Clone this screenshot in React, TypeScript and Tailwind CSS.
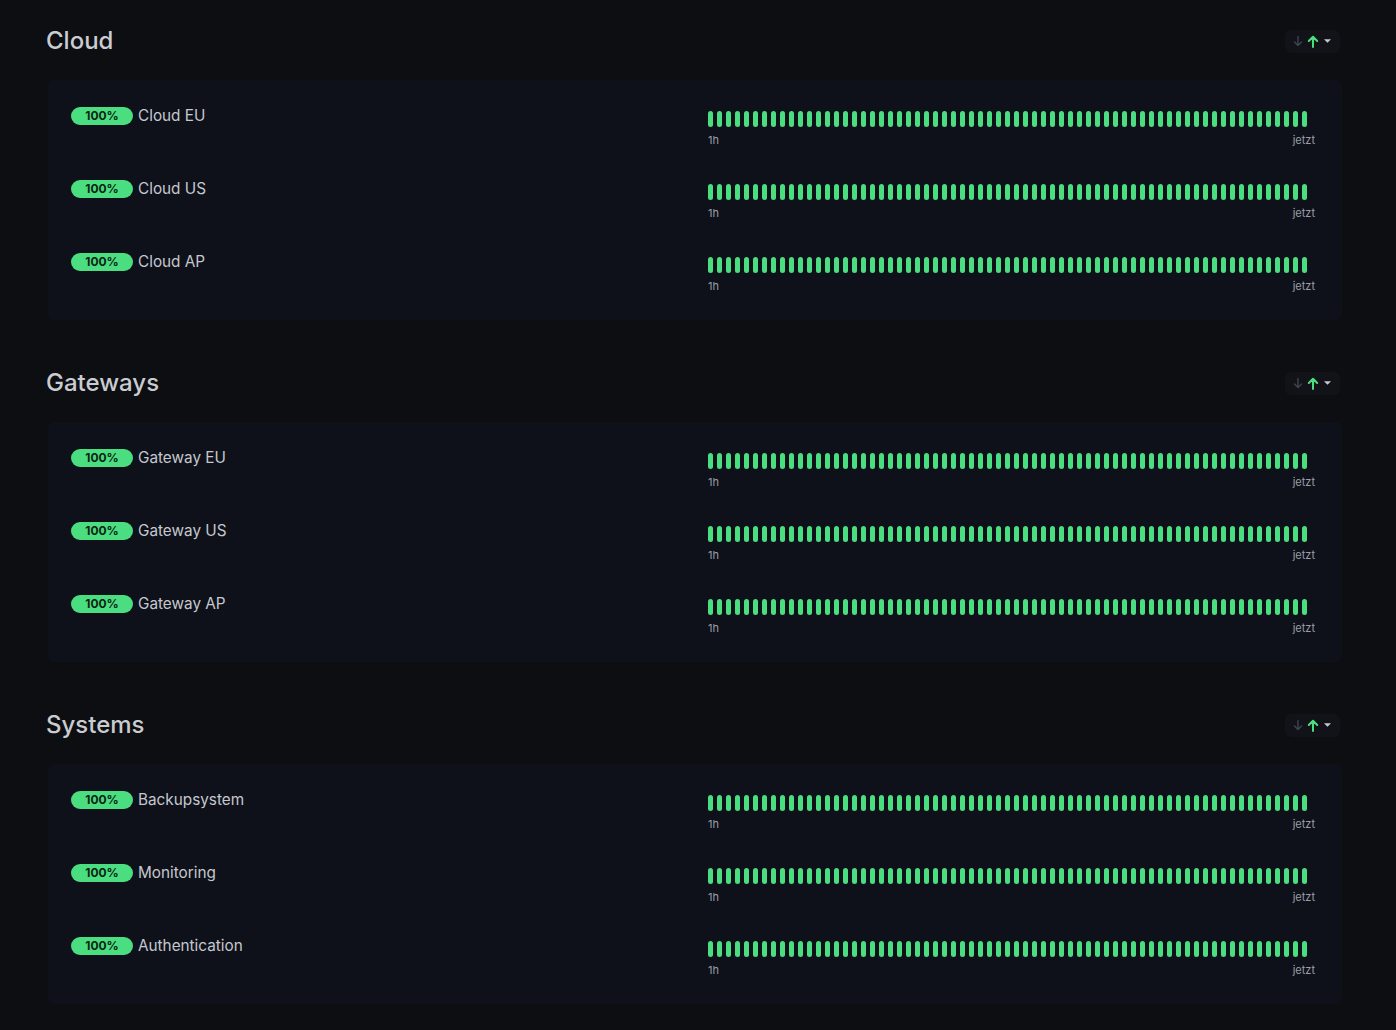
import React from "react";

const sections = [
  { title: "Cloud", items: ["Cloud EU", "Cloud US", "Cloud AP"] },
  { title: "Gateways", items: ["Gateway EU", "Gateway US", "Gateway AP"] },
  { title: "Systems", items: ["Backupsystem", "Monitoring", "Authentication"] },
];

const BARS = Array.from({ length: 67 }, (_, i) => i);

function SortControl() {
  return (
    <div className="flex items-center gap-[4px] rounded-md bg-[#111318] px-[8px] py-[5px]">
      <svg width="10" height="12" viewBox="0 0 10 12" fill="none">
        <path d="M5 1.5V10.5M1.5 7L5 10.5L8.5 7" stroke="#3f4450" strokeWidth="1.4" strokeLinecap="round" strokeLinejoin="round" />
      </svg>
      <svg width="12" height="13" viewBox="0 0 12 13" fill="none">
        <path d="M6 12V1.8M1.8 6L6 1.8L10.2 6" stroke="#4ade80" strokeWidth="2" strokeLinecap="round" strokeLinejoin="round" />
      </svg>
      <svg width="9" height="6" viewBox="0 0 9 6" fill="none">
        <path d="M1 1.2H8L4.5 4.8Z" fill="#c7cad0" />
      </svg>
    </div>
  );
}

function Row({ name }: { name: string }) {
  return (
    <div className="flex h-[48px] items-start justify-between">
      <div className="mt-[1px] flex items-center gap-[5px]">
        <span className="flex h-[18px] w-[62px] items-center justify-center rounded-full bg-[#4ade80] text-[12px] font-bold leading-none text-[#0b2414]">
          100%
        </span>
        <span className="text-[15.3px] leading-[20px] text-[#c5c8ce]">{name}</span>
      </div>
      <div className="flex w-[608px] flex-col pt-[6px]">
        <div className="flex gap-[4px]">
          {BARS.map((i) => (
            <div key={i} className="h-[16px] w-[5px] rounded-full bg-[#4ade80]" />
          ))}
        </div>
        <div className="mt-[6px] flex justify-between pr-[1px] text-[11px] leading-[14px] text-[#9a9ea6]">
          <span>1h</span>
          <span>jetzt</span>
        </div>
      </div>
    </div>
  );
}

export default function App() {
  return (
    <div
      className="min-h-[1030px] bg-[#0d0e11] pl-[46px] pr-[54px] pt-[25px]"
      style={{ fontFamily: "Inter, 'Noto Sans', sans-serif" }}
    >
      <div className="flex flex-col gap-[47px]">
        {sections.map((s) => (
          <section key={s.title} className="flex flex-col">
            <div className="flex h-[32px] items-center justify-between pr-[2px]">
              <h2 className="text-[24px] font-medium leading-[32px] text-[#c9ccd1]">{s.title}</h2>
              <SortControl />
            </div>
            <div className="ml-[2px] mt-[23px] flex flex-col gap-[25px] rounded-md bg-[#0e111a] pb-[21px] pl-[23px] pr-[26px] pt-[25px]">
              {s.items.map((it) => (
                <Row key={it} name={it} />
              ))}
            </div>
          </section>
        ))}
      </div>
    </div>
  );
}
